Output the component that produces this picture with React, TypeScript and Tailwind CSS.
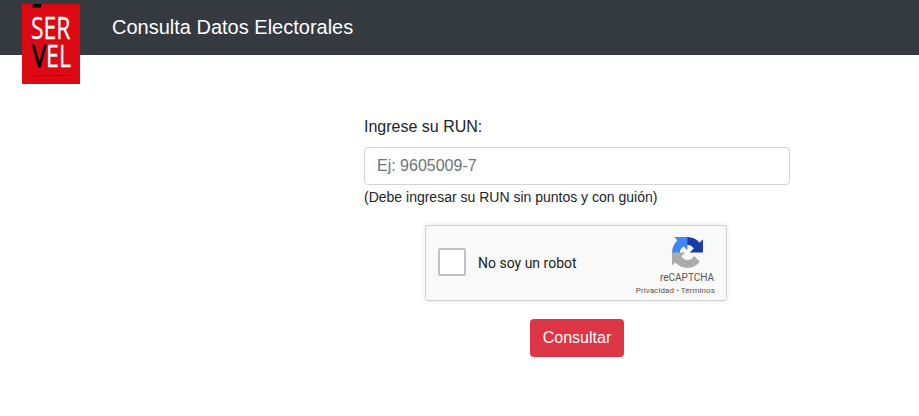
import React, { useState } from 'react';

const ServelLogo: React.FC = () => (
    <svg width="58" height="80" viewBox="0 0 58 80" className="shrink-0" aria-label="Servel">
        <rect width="58" height="80" fill="#dc0814" />
        <path d="M11 0h8.5l-.8 3.5H10z" fill="#000" />
        <g className="font-['Open_Sans',sans-serif]" fontSize="31" fill="#fff" stroke="#fff" strokeWidth=".3">
            <text x="9" y="35" textLength="39.5" lengthAdjust="spacingAndGlyphs">SER</text>
            <text x="10" y="63" textLength="14" lengthAdjust="spacingAndGlyphs" fill="#000" stroke="#000" strokeWidth="1">V</text>
            <text x="24" y="63" textLength="25" lengthAdjust="spacingAndGlyphs">EL</text>
        </g>
        <path d="M10 71.5h38" stroke="#970910" />
    </svg>
);

const RecaptchaIcon: React.FC = () => (
    <svg width="31" height="31" viewBox="0 0 64 64" className="mr-3">
        <path fill="#1c3aa9" d="M64 31.955l-.033-1.37V4.687l-7.16 7.16C50.948 4.674 42.033.093 32.05.093c-10.4 0-19.622 4.96-25.458 12.64l11.736 11.86a15.55 15.55 0 0 1 4.754-5.334c2.05-1.6 4.952-2.906 8.968-2.906.485 0 .86.057 1.135.163 4.976.393 9.288 3.14 11.828 7.124l-8.307 8.307L64 31.953" />
        <path fill="#4285f4" d="M31.862.094l-1.37.033H4.594l7.16 7.16C4.58 13.147 0 22.06 0 32.046c0 10.4 4.96 19.622 12.64 25.458L24.5 45.768a15.55 15.55 0 0 1-5.334-4.754c-1.6-2.05-2.906-4.952-2.906-8.968 0-.485.057-.86.163-1.135.393-4.976 3.14-9.288 7.124-11.828l8.307 8.307L31.86.095" />
        <path fill="#ababab" d="M.001 32.045l.033 1.37v25.898l7.16-7.16c5.86 7.173 14.774 11.754 24.76 11.754 10.4 0 19.622-4.96 25.458-12.64l-11.736-11.86a15.55 15.55 0 0 1-4.754 5.334c-2.05 1.6-4.952 2.906-8.968 2.906-.485 0-.86-.057-1.135-.163-4.976-.393-9.288-3.14-11.828-7.124l8.307-8.307c-10.522.04-22.4.066-27.295-.005" />
    </svg>
);

const Recaptcha: React.FC = () => {
    const [checked, setChecked] = useState(false);

    return (
        <div className="flex w-[302px] h-[76px] mr-0.5 justify-between bg-[#f9f9f9] border border-[#d3d3d3] rounded-[3px] shadow-[0_0_4px_1px_rgba(0,0,0,0.08)] font-[Roboto,sans-serif]">
            <label className="flex items-center pl-3 pb-px gap-3">
                <input
                    type="checkbox"
                    checked={checked}
                    onChange={() => setChecked(!checked)}
                    className="appearance-none size-7 mb-0.5 bg-white border-2 border-[#c1c1c1] rounded-xs checked:bg-[#4285f4]"
                />
                <span className="text-sm text-[#222]">No soy un robot</span>
            </label>
            <div className="flex flex-col items-end pt-[11px] pr-[11px] text-[#555]">
                <RecaptchaIcon />
                <span className="text-[10px] leading-[10px] mt-[5px] mr-px">reCAPTCHA</span>
                <span className="text-[8px] leading-[10px] mt-[3px] tracking-[0.09px]">Privacidad • Términos</span>
            </div>
        </div>
    );
};

const App: React.FC = () => {
    const [run, setRun] = useState('');

    return (
        <div className="min-h-screen bg-white text-[#212529] font-['Liberation_Sans',Arial,sans-serif]">
            <header className="flex h-[55px] items-start bg-[#343a40] pl-[22px] pt-1 gap-8">
                <ServelLogo />
                <h1 className="text-xl leading-[30px] text-white pt-2">Consulta Datos Electorales</h1>
            </header>
            <main className="pl-[364px] pt-[60px]">
                <form className="flex w-[426px] flex-col" onSubmit={e => e.preventDefault()}>
                    <label htmlFor="run" className="text-base leading-6 mb-2">Ingrese su RUN:</label>
                    <input
                        id="run"
                        value={run}
                        onChange={e => setRun(e.target.value)}
                        placeholder="Ej: 9605009-7"
                        className="h-[38px] px-3 text-base border border-[#ced4da] rounded placeholder:text-[#6c757d]"
                    />
                    <p className="text-sm leading-[21px] mt-0.5 mb-[17px]">(Debe ingresar su RUN sin puntos y con guión)</p>
                    <div className="flex flex-col items-center gap-[18px]">
                        <Recaptcha />
                        <button type="submit" className="h-[38px] w-[94px] text-base text-white bg-[#dc3545] rounded">Consultar</button>
                    </div>
                </form>
            </main>
        </div>
    );
};

export default App;
